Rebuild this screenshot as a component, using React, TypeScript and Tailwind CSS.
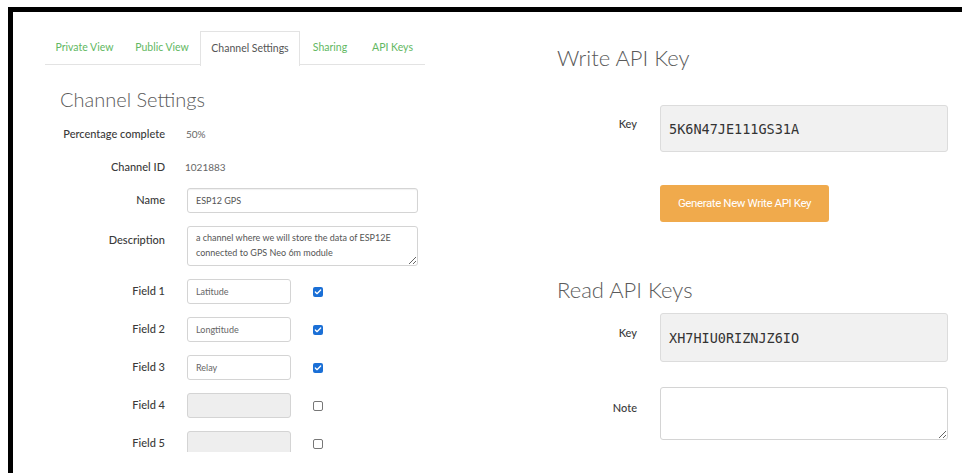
import { Check } from "lucide-react";

const tabs = [
  { label: "Private View", w: "w-[79px]", active: false },
  { label: "Public View", w: "w-[76px]", active: false },
  { label: "Channel Settings", w: "w-[100px]", active: true },
  { label: "Sharing", w: "w-[60px]", active: false },
  { label: "API Keys", w: "w-[65px]", active: false },
];

const fields = [
  { label: "Field 1", value: "Latitude", on: true },
  { label: "Field 2", value: "Longtitude", on: true },
  { label: "Field 3", value: "Relay", on: true },
  { label: "Field 4", value: "", on: false },
  { label: "Field 5", value: "", on: false },
];

const sans = "font-['Lato','Liberation_Sans',sans-serif]";
const mono = "font-['DejaVu_Sans_Mono','Liberation_Mono',monospace]";

function Box({ on }: { on: boolean }) {
  if (on) {
    return (
      <span className="block w-[10px] h-[10px] rounded-[2px] bg-[#1a6fd6] flex items-center justify-center">
        <Check className="w-[8px] h-[8px] text-white" strokeWidth={4} />
      </span>
    );
  }
  return <span className="block w-[10px] h-[10px] rounded-[2px] border border-[#777] bg-white" />;
}

function Label({ children, className = "" }: { children: React.ReactNode; className?: string }) {
  return (
    <div className={`w-[120px] shrink-0 text-right text-[11px] font-medium text-[#3a3a3a] ${className}`}>
      {children}
    </div>
  );
}

export default function App() {
  return (
    <div className={`w-[962px] h-[473px] bg-white pt-[7px] pl-[8px] overflow-hidden ${sans}`}>
      <div className="h-full border-t-[5px] border-l-[5px] border-black flex">
        {/* Channel settings column */}
        <div className="w-[412px] h-[440px] pl-[32px] overflow-hidden shrink-0">
          <div className="mt-[19px] w-[380px] h-[34px] flex border-b border-[#e3e3e3]">
            {tabs.map((t) => (
              <div
                key={t.label}
                className={`${t.w} h-[34px] flex items-center justify-center text-[10.5px] ${
                  t.active
                    ? "bg-white border border-b-0 border-[#e3e3e3] h-[35px] text-[#555]"
                    : "text-[#62b862]"
                }`}
              >
                {t.label}
              </div>
            ))}
          </div>

          <h2 className="mt-[22px] ml-[15px] text-[20px] leading-[24px] font-light text-[#5a5a5a]">
            Channel Settings
          </h2>

          <div className="flex flex-col">
            <div className="mt-[11px] h-[25px] flex items-center">
              <Label>Percentage complete</Label>
              <span className="ml-[21px] text-[10px] text-[#666]">50%</span>
            </div>
            <div className="mt-[8px] h-[25px] flex items-center">
              <Label>Channel ID</Label>
              <span className="ml-[20px] text-[10px] text-[#666]">1021883</span>
            </div>
            <div className="mt-[8px] h-[25px] flex items-center">
              <Label>Name</Label>
              <div className="ml-[22px] w-[231px] h-[25px] border border-[#d4d4d4] rounded-[3px] shadow-[inset_0_1px_1px_rgba(0,0,0,0.06)] flex items-center pl-[8px] text-[9px] text-[#555]">
                ESP12 GPS
              </div>
            </div>
            <div className="mt-[13px] flex items-start">
              <Label className="pt-[6px]">Description</Label>
              <textarea
                readOnly
                className="ml-[22px] w-[231px] h-[40px] border border-[#d4d4d4] rounded-[3px] pl-[8px] pt-[3px] text-[9px] leading-[15px] text-[#555] outline-none"
                defaultValue="a channel where we will store the data of ESP12E connected to GPS Neo 6m module"
              />
            </div>
            {fields.map((f) => (
              <div key={f.label} className="mt-[13px] h-[25px] flex items-center">
                <Label>{f.label}</Label>
                <div
                  className={`ml-[22px] w-[104px] h-[25px] border border-[#d4d4d4] rounded-[3px] flex items-center pl-[8px] text-[9px] text-[#666] ${
                    f.value ? "bg-white" : "bg-[#eeeeee]"
                  }`}
                >
                  {f.value}
                </div>
                <span className="ml-[22px]">
                  <Box on={f.on} />
                </span>
              </div>
            ))}
          </div>
        </div>

        {/* API keys column */}
        <div className="ml-[132px] w-[391px] shrink-0">
          <h2 className="mt-[32px] text-[22px] leading-[27px] font-light text-[#5a5a5a]">Write API Key</h2>
          <div className="mt-[34px] flex items-start">
            <div className="w-[80px] pt-[11px] text-right text-[11px] font-medium text-[#3a3a3a]">Key</div>
            <div className={`ml-[23px] w-[288px] h-[47px] bg-[#f1f1f1] border border-[#dcdcdc] rounded-[3px] flex items-center pl-[8px] pt-[2px] ${mono} text-[13.5px] text-[#333]`}>
              5K6N47JE111GS31A
            </div>
          </div>
          <button className="mt-[33px] ml-[103px] w-[169px] h-[37px] bg-[#f0aa4c] rounded-[3px] text-white text-[11.5px] tracking-[-0.4px] font-['Roboto',sans-serif]">
            Generate New Write API Key
          </button>

          <h2 className="mt-[54px] text-[22px] leading-[27px] font-light text-[#5a5a5a]">Read API Keys</h2>
          <div className="mt-[10px] flex items-start">
            <div className="w-[80px] pt-[12px] text-right text-[11px] font-medium text-[#3a3a3a]">Key</div>
            <div className={`ml-[23px] w-[288px] h-[49px] bg-[#f1f1f1] border border-[#dcdcdc] rounded-[3px] flex items-center pl-[8px] pt-[2px] ${mono} text-[13.5px] text-[#333]`}>
              XH7HIU0RIZNJZ6IO
            </div>
          </div>
          <div className="mt-[25px] flex items-start">
            <div className="w-[80px] pt-[13px] text-right text-[11px] font-medium text-[#3a3a3a]">Note</div>
            <textarea
              readOnly
              className="ml-[23px] w-[288px] h-[53px] border border-[#d4d4d4] rounded-[3px] outline-none"
            />
          </div>
        </div>
      </div>
    </div>
  );
}
